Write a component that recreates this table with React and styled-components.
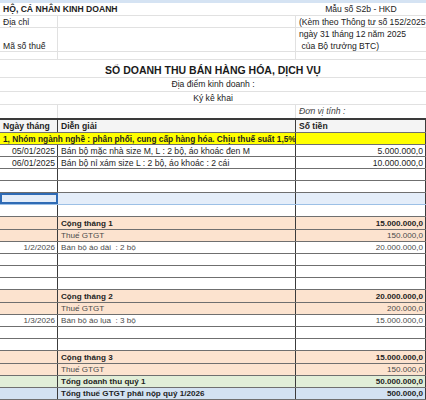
import React from 'react';
import styled, { createGlobalStyle } from 'styled-components';

const GlobalStyle = createGlobalStyle`
  html, body {
    margin: 0;
    padding: 0;
    background: #ffffff;
  }
  body {
    font-family: "Liberation Sans", Arial, sans-serif;
    color: #222;
  }
`;

const COLS = '58px 238px 130px';

const Sheet = styled.div`
  width: 426px;
  height: 400px;
  overflow: hidden;
  background: #fff;
`;

const TopStrip = styled.div`
  height: 3px;
  background: #d5e3f3;
`;

// ---- upper part (form heading, Excel gridlines only) ----

const InfoRow = styled.div`
  display: grid;
  grid-template-columns: ${COLS};
  height: ${p => p.$h}px;
  box-sizing: border-box;
  border-bottom: 1px solid ${p => p.$noLine ? 'transparent' : '#e1e1e1'};
  font-size: 8.6px;
`;

const InfoCell = styled.div`
  grid-column: ${p => p.$span || 'auto'};
  display: flex;
  flex-direction: column;
  justify-content: flex-end;
  align-items: ${p => p.$center ? 'center' : 'flex-start'};
  padding: 0 3px 1px;
  box-sizing: border-box;
  border-right: ${p => p.$line ? '1px solid #e1e1e1' : 'none'};
  font-weight: ${p => p.$bold ? 700 : 400};
  font-style: ${p => p.$italic ? 'italic' : 'normal'};
  color: ${p => p.$muted ? '#444' : '#222'};
  white-space: pre;
  overflow: visible;
  line-height: 12px;
`;

const Title = styled.div`
  font-size: 10.5px;
  font-weight: 700;
  color: #1a1a1a;
`;

// ---- ledger table ----

const Table = styled.div`
  border-top: 2px solid #3a3a3a;
`;

const palette = {
  head: '#f4f4f4',
  group: '#ffff00',
  sum: '#fce3cf',
  tax: '#fce3cf',
  total: '#e1eed8',
  grand: '#d3e2f2',
  selected: '#e4edf9',
};

const Row = styled.div`
  display: grid;
  grid-template-columns: ${COLS};
  height: ${p => p.$h || 12}px;
  box-sizing: border-box;
  background: ${p => palette[p.$kind] || '#fff'};
  border-bottom: 1px solid ${p => p.$kind === 'selected' ? '#9cc0e6' : '#6f6f6f'};
  font-size: ${p => p.$small ? '8.1px' : '8.6px'};
  font-weight: ${p => p.$bold ? 700 : 400};
  color: ${p => p.$small && !p.$bold ? '#4a4a4a' : '#1e1e1e'};
`;

const Cell = styled.div`
  display: flex;
  align-items: center;
  justify-content: ${p => p.$right ? 'flex-end' : 'flex-start'};
  padding: 0 ${p => p.$right ? '2px' : '3px'} 0 3px;
  box-sizing: border-box;
  border-right: 1px solid #3c3c3c;
  white-space: pre;
  overflow: visible;
`;

const SelectedCell = styled(Cell)`
  outline: 2px solid #2f6bb5;
  outline-offset: -2px;
`;

const GroupCell = styled(Cell)`
  grid-column: 1 / 3;
  font-size: 8.3px;
  font-weight: 700;
`;

const Filler = styled.div`
  display: grid;
  grid-template-columns: ${COLS};
  height: 6px;
  & > div { border-right: 1px solid #e1e1e1; }
`;

const entries = [
  { date: '05/01/2025', desc: 'Bán bộ mặc nhà size M, L : 2 bộ, áo khoác đen M', amount: '5.000.000,0' },
  { date: '06/01/2025', desc: 'Bán bộ nỉ xám size L : 2 bộ, áo khoác : 2 cái', amount: '10.000.000,0' },
  {},
  {},
  { kind: 'selected' },
  {},
  { kind: 'sum', desc: 'Cộng tháng 1', amount: '15.000.000,0' },
  { kind: 'tax', desc: 'Thuế GTGT', amount: '150.000,0' },
  { kind: 'light', date: '1/2/2026', desc: 'Bán bộ áo dài  : 2 bộ', amount: '20.000.000,0' },
  {},
  {},
  {},
  { kind: 'sum', desc: 'Cộng tháng 2', amount: '20.000.000,0' },
  { kind: 'tax', desc: 'Thuế GTGT', amount: '200.000,0' },
  { kind: 'light', date: '1/3/2026', desc: 'Bán bộ áo lụa  : 3 bộ', amount: '15.000.000,0' },
  {},
  {},
  { kind: 'sum', desc: 'Cộng tháng 3', amount: '15.000.000,0' },
  { kind: 'tax', desc: 'Thuế GTGT', amount: '150.000,0' },
  { kind: 'total', desc: 'Tổng doanh thu quý 1', amount: '50.000.000,0' },
  { kind: 'grand', desc: 'Tổng thuế GTGT phải nộp quý 1/2026', amount: '500.000,0' },
];

const LedgerRow = ({ item }) => {
  const { kind, date = '', desc = '', amount = '' } = item;
  const bold = kind === 'sum' || kind === 'total' || kind === 'grand';
  const small = bold || kind === 'tax' || kind === 'light';
  const First = kind === 'selected' ? SelectedCell : Cell;
  return (
    <Row $kind={kind} $h={kind === 'sum' ? 13 : 12} $bold={bold} $small={small}>
      <First $right>{date}</First>
      <Cell>{desc}</Cell>
      <Cell $right>{amount}</Cell>
    </Row>
  );
};

export default function App() {
  return (
    <>
      <GlobalStyle />
      <Sheet>
        <TopStrip />

        <InfoRow $h={13}>
          <InfoCell $span="1 / 3" $bold>HỘ, CÁ NHÂN KINH DOANH</InfoCell>
          <InfoCell $center>Mẫu số S2b - HKD</InfoCell>
        </InfoRow>
        <InfoRow $h={12}>
          <InfoCell $line>Địa chỉ</InfoCell>
          <InfoCell $line />
          <InfoCell>(Kèm theo Thông tư số 152/2025</InfoCell>
        </InfoRow>
        <InfoRow $h={24}>
          <InfoCell $line>Mã số thuế</InfoCell>
          <InfoCell $line />
          <InfoCell>{'ngày 31 tháng 12 năm 2025\n của Bộ trưởng BTC)'}</InfoCell>
        </InfoRow>
        <InfoRow $h={8}>
          <InfoCell $line />
          <InfoCell $line />
          <InfoCell />
        </InfoRow>
        <InfoRow $h={18}>
          <InfoCell $span="1 / 4" $center>
            <Title>SỔ DOANH THU BÁN HÀNG HÓA, DỊCH VỤ</Title>
          </InfoCell>
        </InfoRow>
        <InfoRow $h={14}>
          <InfoCell $span="1 / 4" $center>Địa điểm kinh doanh :</InfoCell>
        </InfoRow>
        <InfoRow $h={13}>
          <InfoCell $span="1 / 4" $center>Ký kê khai</InfoCell>
        </InfoRow>
        <InfoRow $h={13} $noLine>
          <InfoCell $line />
          <InfoCell $line />
          <InfoCell $italic $muted>Đơn vị tính :</InfoCell>
        </InfoRow>

        <Table>
          <Row $kind="head" $h={13} $bold>
            <Cell>Ngày tháng</Cell>
            <Cell>Diễn giải</Cell>
            <Cell>Số tiền</Cell>
          </Row>
          <Row $kind="group" $bold>
            <GroupCell>1, Nhóm ngành nghề : phân phối, cung cấp hàng hóa. Chịu thuế suất 1,5%</GroupCell>
            <Cell />
          </Row>
          {entries.map((item, i) => (
            <LedgerRow key={i} item={item} />
          ))}
          <Filler>
            <div />
            <div />
            <div />
          </Filler>
        </Table>
      </Sheet>
    </>
  );
}
